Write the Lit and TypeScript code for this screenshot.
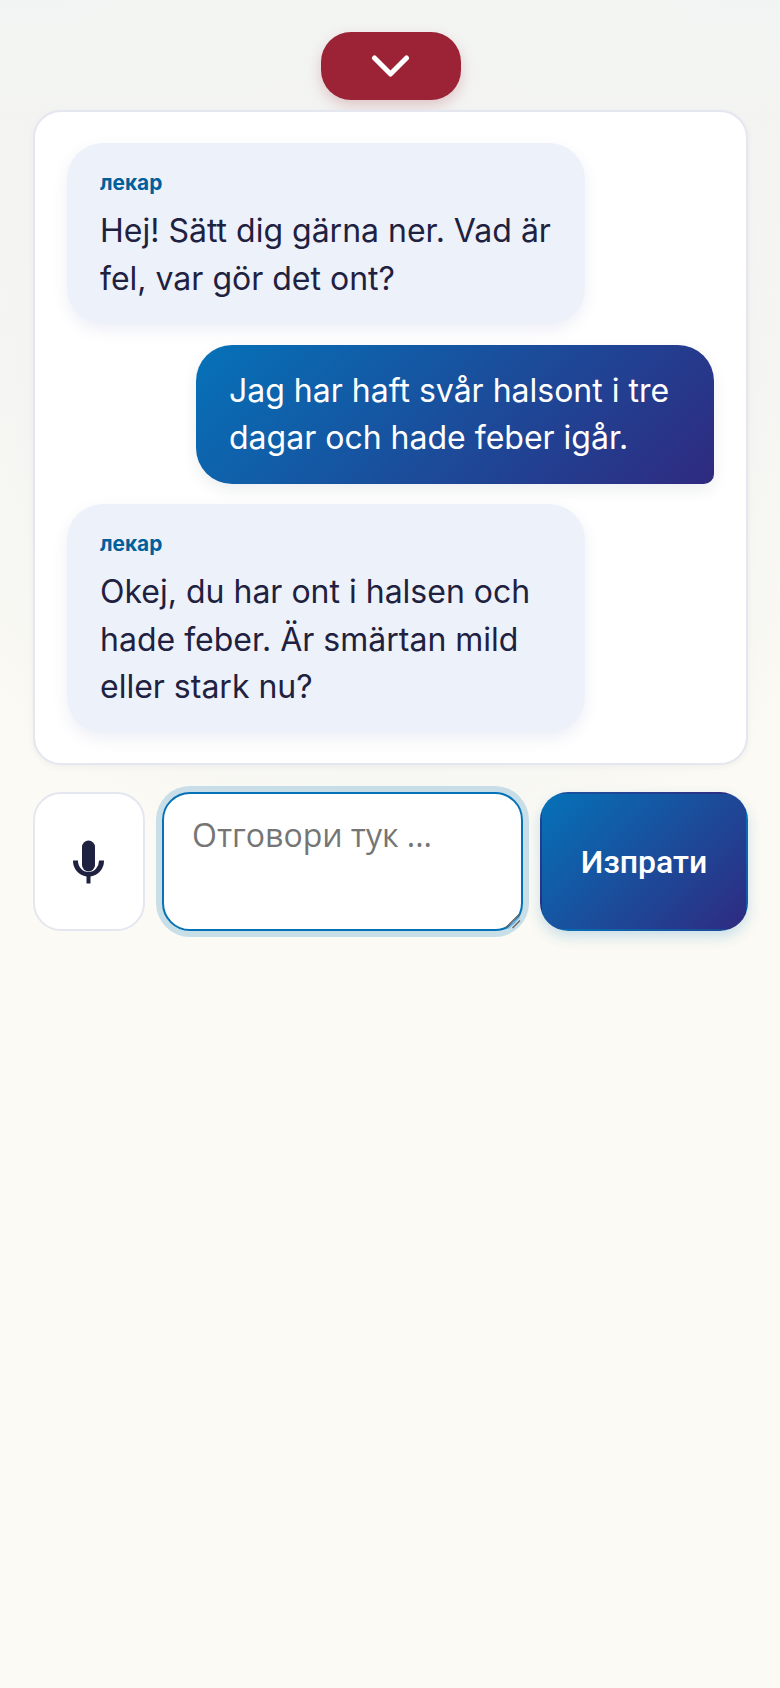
import { LitElement, html, css } from "lit";
import { customElement } from "lit/decorators.js";

@customElement("app-root")
export class AppRoot extends LitElement {
  static styles = css`
    :host {
      display: block;
      height: 1688px;
      overflow: hidden;
      box-sizing: border-box;
      padding: 32px 32px 0 33px;
      font-family: "Inter", "Noto Sans", sans-serif;
      color: #1f2140;
      background:
        radial-gradient(ellipse 540px 500px at 390px 380px, #f3f4f2 55%, rgba(243, 244, 242, 0) 100%),
        linear-gradient(#f2f4f3 0, #f3f4f2 120px, #fbfaf4 500px);
      background-color: #fbfaf4;
    }
    * { box-sizing: border-box; }
    .toggle {
      display: flex;
      align-items: center;
      justify-content: center;
      width: 140px;
      height: 68px;
      margin: 0 auto 10px;
      padding: 0;
      border: none;
      border-radius: 30px;
      background: #9b2335;
      box-shadow: 0 6px 14px rgba(155, 35, 53, 0.22);
    }
    .toggle svg { width: 40px; height: 40px; }
    .card {
      display: flex;
      flex-direction: column;
      gap: 20.5px;
      width: 715px;
      height: 655px;
      padding: 31px 32px;
      background: #fff;
      border: 2px solid #e4e6f0;
      border-radius: 28px;
      box-shadow: 0 2px 6px rgba(31, 33, 64, 0.05);
    }
    .bubble {
      width: 518px;
      padding: 22px 32px 22px 33px;
      border-radius: 36px;
      font-size: 32px;
      line-height: 47.5px;
    }
    .doc {
      align-self: flex-start;
      background: #edf1f9;
      box-shadow: 0 6px 16px rgba(70, 80, 160, 0.09);
    }
    .me {
      align-self: flex-end;
      color: #fff;
      background: linear-gradient(135deg, #0572b8, #2f2a80);
      border-bottom-right-radius: 10px;
      box-shadow: 0 6px 16px rgba(31, 33, 64, 0.08);
    }
    .who {
      font-size: 20.8px;
      line-height: 35px;
      font-weight: 700;
      color: #015f9b;
      margin-bottom: 7px;
    }
    .row {
      display: flex;
      gap: 17px;
      width: 715px;
      height: 139px;
      margin-top: 27px;
    }
    .mic {
      display: flex;
      align-items: center;
      justify-content: center;
      width: 112px;
      padding: 0;
      background: #fff;
      border: 2px solid #e4e6f0;
      border-radius: 28px;
    }
    .mic svg { width: 46px; height: 46px; }
    .field {
      position: relative;
      width: 361px;
      padding: 21px 28px;
      background: #fff;
      border: 2px solid #0572b8;
      border-radius: 28px;
      box-shadow: 0 0 0 6px rgba(5, 114, 184, 0.2);
      font-family: "Open Sans", "Noto Sans", sans-serif;
      font-size: 32px;
      line-height: 40px;
      color: #757575;
    }
    .grip {
      position: absolute;
      right: 0;
      bottom: 0;
      width: 16px;
      height: 16px;
    }
    .send {
      display: flex;
      align-items: center;
      justify-content: center;
      width: 208px;
      padding: 0;
      border: 2px solid transparent;
      border-radius: 28px;
      color: #fff;
      background: linear-gradient(135deg, #0572b8, #2f2a80);
      box-shadow: 0 6px 14px rgba(5, 114, 184, 0.2);
      font-family: "Roboto", sans-serif;
      font-size: 32px;
      font-weight: 500;
    }
  `;

  render() {
    return html`
      <button class="toggle" aria-label="Свий">
        <svg viewBox="0 0 40 40" fill="none" stroke="#fff" stroke-width="5" stroke-linecap="round" stroke-linejoin="round">
          <path d="M3.5 12 L19.5 28 L35.5 12" />
        </svg>
      </button>
      <div class="card">
        <div class="bubble doc">
          <div class="who">лекар</div>
          Hej! Sätt dig gärna ner. Vad är fel, var gör det ont?
        </div>
        <div class="bubble me">Jag har haft svår halsont i tre dagar och hade feber igår.</div>
        <div class="bubble doc">
          <div class="who">лекар</div>
          Okej, du har ont i halsen och hade feber. Är smärtan mild eller stark nu?
        </div>
      </div>
      <div class="row">
        <button class="mic" aria-label="Микрофон">
          <svg viewBox="0 0 46 46" fill="#1f2140">
            <rect x="16" y="1.5" width="13" height="31" rx="6.5" />
            <path d="M7 21.5 h5 v0.5 a10.5 11 0 0 0 21 0 v-0.5 h5 v0.5 a15.5 15.5 0 0 1 -13.5 15.4 V44.5 h-4 V37.4 A15.5 15.5 0 0 1 7 22 Z" />
          </svg>
        </button>
        <div class="field">
          Отговори тук ...
          <svg class="grip" viewBox="0 0 16 16" fill="none" stroke-width="1.3">
            <path stroke="#666" d="M0.5 15 L14.5 1 M7.5 15 L15 7.5" />
            <path stroke="#7fb6dc" d="M3 15.5 L15 3.5" />
          </svg>
        </div>
        <button class="send">Изпрати</button>
      </div>
    `;
  }
}
